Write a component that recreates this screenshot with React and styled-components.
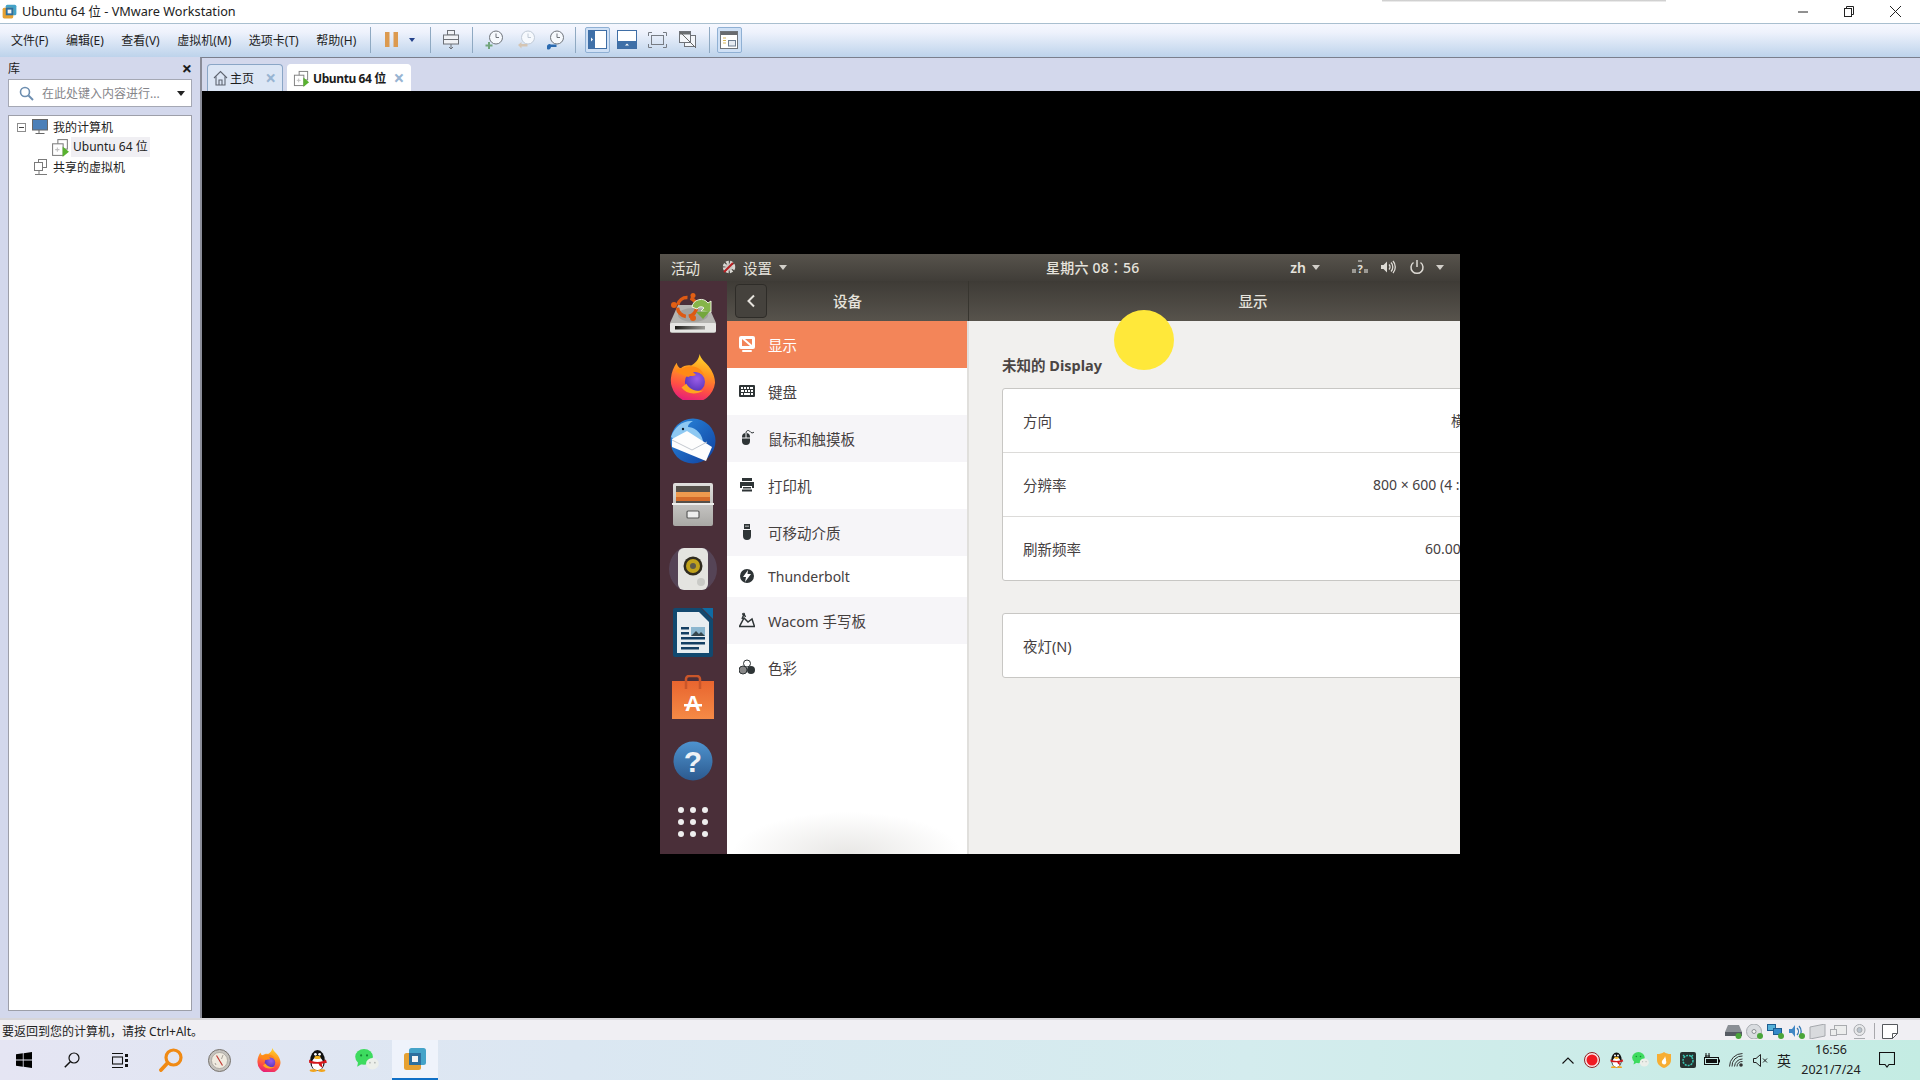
import React from 'react';
import styled, { createGlobalStyle } from 'styled-components';

const GlobalStyle = createGlobalStyle`
  html, body { margin: 0; padding: 0; height: 100%; overflow: hidden; background: #fff; }
  #root { height: 100%; }
  * { box-sizing: border-box; }
  body { font-family: "Noto Sans", "Noto Sans CJK SC", sans-serif; color: #1c1c1c; }
  svg { display: block; }
`;

const Page = styled.div`
  position: relative;
  display: flex;
  flex-direction: column;
  width: 1920px;
  height: 1080px;
  overflow: hidden;
`;

/* ---------- window chrome ---------- */

const TitleBar = styled.div`
  display: flex;
  align-items: center;
  height: 23px;
  flex: none;
  padding-left: 2px;
  background: #fff;
`;

const TitleText = styled.span`
  margin-left: 5px;
  font-size: 12.7px;
  line-height: 23px;
  color: #222;
`;

const WinControls = styled.div`
  display: flex;
  margin-left: auto;
  padding-right: 2px;
`;

const WinButton = styled.div`
  display: flex;
  align-items: center;
  justify-content: center;
  width: 46px;
  height: 23px;
`;

const FloatShadow = styled.div`
  position: absolute;
  top: 0;
  left: 1382px;
  width: 284px;
  height: 2px;
  background: linear-gradient(#c4c4c4, #f6f6f6);
`;

const Toolbar = styled.div`
  display: flex;
  align-items: center;
  height: 34px;
  flex: none;
  padding: 0 0 2px 11px;
  border-top: 1px solid #a9bfcf;
  background: linear-gradient(#f5f7fe, #eef2fc 25%, #bdd3eb);
`;

const MenuItem = styled.span`
  font-size: 12px;
  margin-right: 17.5px;
  color: #1e1e1e;
  white-space: nowrap;
`;

const ToolSep = styled.span`
  width: 1px;
  height: 26px;
  margin-left: ${p => p.$ml}px;
  background: #8fa9c2;
`;

const ToolSlot = styled.span`
  display: flex;
  align-items: center;
  justify-content: center;
  width: ${p => p.$w}px;
  height: 26px;
  margin-left: ${p => p.$ml}px;
  border-radius: 2px;
  border: ${p => (p.$active ? '1px solid #8fb0d4' : 'none')};
  background: ${p => (p.$active ? '#cfe0f5' : 'transparent')};
`;

const Main = styled.div`
  display: flex;
  flex: 1;
  min-height: 0;
  background: #d3d8ec;
`;

/* ---------- library pane ---------- */

const Library = styled.aside`
  display: flex;
  flex-direction: column;
  width: 200px;
  flex: none;
  padding: 0 8px 7px;
`;

const LibraryHead = styled.div`
  display: flex;
  align-items: center;
  justify-content: space-between;
  height: 22px;
  font-size: 12px;
`;

const CloseMark = styled.span`
  font-size: 18px;
  line-height: 18px;
  font-weight: 700;
`;

const SearchBox = styled.div`
  display: flex;
  align-items: center;
  height: 28px;
  padding: 0 6px 0 10px;
  border: 1px solid #a5a8b4;
  background: #fff;
  font-size: 12px;
  color: #85858a;
  gap: 8px;
`;

const SearchCaret = styled.span`
  width: 0;
  height: 0;
  margin-left: auto;
  border-left: 4px solid transparent;
  border-right: 4px solid transparent;
  border-top: 5px solid #222;
`;

const Tree = styled.div`
  display: flex;
  flex-direction: column;
  flex: 1;
  margin-top: 8px;
  padding-top: 1px;
  border: 1px solid #9d9fa9;
  background: #fff;
`;

const TreeRow = styled.div`
  display: flex;
  align-items: center;
  height: 20px;
  padding-left: ${p => p.$pad}px;
  font-size: 12px;
  gap: ${p => p.$gap || 3}px;
  color: #222;
`;

const Expander = styled.span`
  display: flex;
  align-items: center;
  justify-content: center;
  width: 9px;
  height: 9px;
  margin-right: 1px;
  border: 1px solid #8d8d8d;
  &::before { content: ''; width: 5px; height: 1px; background: #444; }
`;

const Selected = styled.span`
  padding: 0 2px;
  line-height: 20px;
  background: #f0eff3;
  white-space: nowrap;
`;

const Workspace = styled.section`
  display: flex;
  flex-direction: column;
  flex: 1;
  min-width: 0;
  border-top: 1px solid #7b7f8c;
  border-left: 2px solid #8a8c98;
`;

const TabStrip = styled.div`
  display: flex;
  align-items: flex-end;
  gap: 4px;
  height: 33px;
  flex: none;
  padding-left: 5px;
`;

const Tab = styled.div`
  display: flex;
  align-items: center;
  width: ${p => p.$w}px;
  height: 27px;
  padding: 0 6px 0 5px;
  gap: ${p => (p.$active ? 3 : 2)}px;
  font-size: 12px;
  font-weight: ${p => (p.$active ? 700 : 400)};
  letter-spacing: ${p => (p.$active ? '-0.4px' : '0')};
  white-space: nowrap;
  border: 1px solid ${p => (p.$active ? '#fff' : '#8aa6c6')};
  border-bottom: none;
  border-radius: 4px 4px 0 0;
  background: ${p => (p.$active ? '#fff' : '#dce6f5')};
`;

const TabClose = styled.span`
  margin-left: auto;
  font-size: 19px;
  line-height: 19px;
  font-weight: 700;
  color: #98b4d2;
`;

const Screen = styled.div`
  display: flex;
  align-items: center;
  justify-content: center;
  flex: 1;
  background: #000;
`;

/* ---------- ubuntu guest ---------- */

const Guest = styled.div`
  position: relative;
  display: flex;
  flex-direction: column;
  width: 800px;
  height: 600px;
  margin: 0 2px 2px 0;
  overflow: hidden;
  background: #f1f0ee;
  font-size: 14.5px;
  color: #45403f;
`;

const GnomeBar = styled.div`
  display: grid;
  grid-template-columns: 386px 97px 1fr;
  align-items: center;
  height: 27px;
  flex: none;
  background: linear-gradient(#57534c, #403d38);
  color: #e6e3dd;
  font-size: 14.5px;
`;

const GnomeLeft = styled.div`
  display: flex;
  align-items: center;
  padding-left: 11px;
`;

const GnomeClock = styled.div`
  font-family: "Noto Sans", "Noto Sans CJK TC", sans-serif;
  font-size: 14px;
  font-weight: 500;
  letter-spacing: 0.2px;
  white-space: nowrap;
`;

const GnomeRight = styled.div`
  display: flex;
  align-items: center;
  justify-content: flex-end;
  padding-right: 16px;
`;

const GnomeLang = styled.span`
  font-size: 14px;
  font-weight: 600;
`;

const Gap = styled.span`
  flex: none;
  width: ${p => p.$w}px;
`;

const Caret = styled.span`
  width: 0;
  height: 0;
  margin-left: ${p => p.$ml || 0}px;
  border-left: 4px solid transparent;
  border-right: 4px solid transparent;
  border-top: 5px solid #d2cfc9;
`;

const GuestBody = styled.div`
  display: flex;
  flex: 1;
  min-height: 0;
`;

const Dock = styled.div`
  display: flex;
  flex-direction: column;
  width: 67px;
  flex: none;
  padding-right: 2px;
  background: #4a2f39;
`;

const DockSlot = styled.div`
  display: flex;
  align-items: center;
  justify-content: center;
  height: 64px;
  flex: none;
`;

const AppDots = styled.div`
  display: grid;
  grid-template-columns: repeat(3, 6px);
  gap: 6px;
  margin-top: -6px;
  span { width: 6px; height: 6px; border-radius: 50%; background: #eee; }
`;

const SettingsWindow = styled.div`
  display: grid;
  grid-template-columns: 242px 568px;
  grid-template-rows: 40px 1fr;
  flex: none;
  width: 810px;
`;

const HeaderCell = styled.div`
  position: relative;
  display: flex;
  align-items: center;
  justify-content: center;
  background: linear-gradient(#3e3b36, #57534c);
  border-right: ${p => (p.$divider ? '1px solid #37352f' : 'none')};
  color: #e6e3dd;
  font-weight: 500;
  font-size: 14.5px;
`;

const BackButton = styled.span`
  position: absolute;
  left: 8px;
  top: 3px;
  display: flex;
  align-items: center;
  justify-content: center;
  width: 32px;
  height: 34px;
  border: 1px solid #2e2c28;
  border-radius: 4px;
  background: #45423d;
`;

const SideList = styled.nav`
  display: flex;
  flex-direction: column;
  background: radial-gradient(ellipse 115px 42px at 50% 100%, #e8e7e5, #fff 100%);
  border-right: 2px solid #e0dfdc;
`;

const SideRow = styled.div`
  display: flex;
  align-items: center;
  gap: 13px;
  height: ${p => p.$h || 47}px;
  flex: none;
  padding-left: 12px;
  font-size: ${p => p.$fs || 14.5}px;
  background: ${p => (p.$active ? '#f38559' : p.$alt ? '#f6f5f8' : 'transparent')};
  color: ${p => (p.$active ? '#fff' : '#45403f')};
`;

const Content = styled.div`
  padding: 34px 0 0 33px;
`;

const SectionTitle = styled.h2`
  margin: 0 0 13px;
  font-size: 14.5px;
  line-height: 20px;
  font-weight: 700;
  color: #4a4543;
`;

const Panel = styled.div`
  width: 520px;
  margin-bottom: 32px;
  border: 1px solid #c8c7c4;
  border-radius: 3px;
  background: #fff;
`;

const PanelRow = styled.div`
  display: flex;
  align-items: center;
  height: 63px;
  padding-left: 20px;
  white-space: nowrap;
  & + & { height: 64px; border-top: 1px solid #dcdbd9; }
`;

const RowLabel = styled.span`
  flex: none;
  width: 100px;
`;

const RowValue = styled.span`
  margin-left: ${p => p.$ml}px;
  font-size: 14px;
`;

const CursorHalo = styled.div`
  position: absolute;
  left: 454px;
  top: 56px;
  width: 60px;
  height: 60px;
  border-radius: 50%;
  background: #ffe83a;
`;

/* ---------- status + taskbar ---------- */

const StatusBar = styled.footer`
  display: flex;
  align-items: center;
  justify-content: space-between;
  height: 22px;
  flex: none;
  padding: 2px 22px 0 2px;
  border-top: 2px solid #d7d6da;
  background: #f0eff3;
  font-size: 12px;
  color: #222;
`;

const StatusIcons = styled.div`
  display: flex;
  align-items: center;
`;

const StatusSlot = styled.span`
  display: flex;
  justify-content: center;
  width: 21px;
`;

const StatusSep = styled.span`
  width: 1px;
  height: 16px;
  margin: 0 7px 0 4px;
  background: #a8a8ac;
`;

const Taskbar = styled.div`
  display: flex;
  align-items: center;
  height: 40px;
  flex: none;
  background: linear-gradient(90deg, #e5e5f3, #dbe7f2 30%, #d4ecee 65%, #c4ece3);
`;

const TaskSlot = styled.span`
  display: flex;
  align-items: center;
  justify-content: center;
  width: ${p => p.$w || 48}px;
  height: 40px;
  margin-left: ${p => p.$ml || 0}px;
  background: ${p => (p.$active ? '#eff3fb' : 'transparent')};
  border-bottom: ${p => (p.$active ? '2px solid #0f6fc6' : 'none')};
  flex: none;
`;

const Tray = styled.div`
  display: flex;
  align-items: center;
  margin-left: auto;
  padding-right: 13px;
`;

const TraySlot = styled.span`
  display: flex;
  align-items: center;
  justify-content: center;
  width: 24px;
  font-size: 14px;
  color: #1c1c1c;
`;

const TrayClock = styled.div`
  display: flex;
  flex-direction: column;
  align-items: center;
  width: 70px;
  font-size: 12.5px;
  line-height: 20px;
  color: #222;
`;

const NotifySlot = styled.span`
  display: flex;
  justify-content: center;
  width: 41px;
`;

/* ---------- icons ---------- */

const VmwareIcon = ({ size = 16 }) => (
  <svg width={size} height={size} viewBox="0 0 24 24">
    <rect x="6" y="1" width="17" height="17" rx="2.5" fill="#44a3c9" />
    <rect x="1" y="6" width="17" height="17" rx="2.5" fill="#e6a132" />
    <rect x="6" y="6" width="12" height="12" fill="#2e6f9e" />
    <rect x="9" y="9" width="6" height="6" fill="#f4f4f4" />
  </svg>
);

const VmTabIcon = ({ size = 17 }) => (
  <svg width={size} height={size} viewBox="0 0 18 18" fill="none" stroke="#7f7f7f">
    <rect x="6.5" y="1.5" width="9" height="9" fill="#fff" />
    <rect x="1.5" y="5.5" width="10" height="11" fill="#fff" />
    <path d="M6 9v4M4 11h4" stroke="#c0c0c0" />
    <path d="M11 8l6 5-6 5z" fill="#58b22f" stroke="none" />
  </svg>
);

const HomeIcon = () => (
  <svg width="15" height="16" viewBox="0 0 15 16" fill="none" stroke="#5e6470" strokeWidth="1.1">
    <path d="M1 8l6.5-6.5L14 8" />
    <path d="M3 6.5V15h9V6.5M6 15v-5h3v5" />
  </svg>
);

const MonitorIcon = () => (
  <svg width="16" height="16" viewBox="0 0 16 16">
    <rect x=".5" y=".5" width="15" height="10.5" fill="#4a7fb8" stroke="#666" />
    <path d="M7 11v3M3.5 14.5h9" stroke="#666" />
  </svg>
);

const SharedIcon = () => (
  <svg width="14" height="16" viewBox="0 0 14 16" fill="none" stroke="#7a7a7a">
    <rect x="4.5" y=".5" width="8" height="8" fill="#fff" />
    <rect x=".5" y="3.5" width="8" height="8" fill="#fff" />
    <path d="M5 12v3M1 15.5h12" />
  </svg>
);

const SearchIcon = () => (
  <svg width="15" height="15" viewBox="0 0 15 15" fill="none" stroke="#6d8eb0" strokeWidth="1.6">
    <circle cx="6" cy="6" r="4.5" />
    <path d="M9.5 9.5l4.5 4.5" strokeWidth="2" />
  </svg>
);

const PauseIcon = () => (
  <svg width="13" height="15" viewBox="0 0 13 15" fill="#dc9a50">
    <rect width="4.5" height="15" />
    <rect x="8.5" width="4.5" height="15" />
  </svg>
);

const SmallCaret = () => (
  <svg width="6" height="4" viewBox="0 0 6 4"><path d="M0 0h6L3 4z" fill="#23418a" /></svg>
);

const SendKeysIcon = () => (
  <svg width="16" height="20" viewBox="0 0 16 20" fill="#f0f2f6" stroke="#6c7077">
    <rect x="4.5" y=".5" width="7" height="4.5" />
    <rect x=".5" y="5" width="15" height="4.5" />
    <rect x=".5" y="9.5" width="15" height="4.5" />
    <path d="M8 14v5M6 17l2 2 2-2" fill="none" />
  </svg>
);

const ClockIcon = ({ faded, badge }) => (
  <svg width="18" height="20" viewBox="0 0 18 20" fill="none">
    <circle cx="11" cy="7.5" r="6.5" fill="#f6f9fd" stroke={faded ? '#c0cad6' : '#70757c'} />
    <path d="M11 3.5v4h3" stroke={faded ? '#c0cad6' : '#70757c'} />
    {badge === 'plus' && <path d="M4 12v7M.5 15.5h7" stroke="#72a67c" strokeWidth="2" />}
    {badge === 'back' && <path d="M1 15l3.5-3v2h6v2.5h-6v2z" fill="#d5c5b3" />}
    {badge === 'tool' && <path d="M1 16a2.5 2.5 0 014-1.5h5.5v2.5H5A2.5 2.5 0 011 19z" fill="#2a6ab0" />}
  </svg>
);

const ViewSidebar = () => (
  <svg width="19" height="19" viewBox="0 0 19 19">
    <rect x=".5" y=".5" width="18" height="18" fill="#fff" stroke="#3f6ea6" />
    <rect x="1" y="1" width="6" height="17" fill="#3f70a8" />
    <path d="M3 7.5l2 2-2 2z" fill="#fff" />
  </svg>
);

const ViewBottom = () => (
  <svg width="20" height="19" viewBox="0 0 20 19">
    <rect x=".5" y=".5" width="19" height="18" fill="#fff" stroke="#3f6ea6" />
    <rect x="1" y="11" width="18" height="7" fill="#3f70a8" />
    <path d="M8 15.5h4L10 13.5z" fill="#fff" />
  </svg>
);

const ViewFull = () => (
  <svg width="19" height="16" viewBox="0 0 19 16" fill="none" stroke="#777c84">
    <rect x="3.5" y="3.5" width="12" height="9" />
    <path d="M.5 4V.5H4M15 .5h3.5V4M18.5 12v3.5H15M4 15.5H.5V12" />
  </svg>
);

const ViewNoUnity = () => (
  <svg width="18" height="18" viewBox="0 0 18 18" fill="#f4f6fa" stroke="#6f7278">
    <rect x="5.5" y="4.5" width="11" height="11" />
    <rect x=".5" y=".5" width="11" height="11" />
    <rect x="1" y="1" width="10" height="2.5" fill="#6b6e72" stroke="none" />
    <path d="M1 1l16 16" stroke="#666" />
  </svg>
);

const ThumbView = () => (
  <svg width="18" height="18" viewBox="0 0 18 18">
    <rect x=".5" y=".5" width="17" height="17" fill="#fff" stroke="#6f747a" />
    <rect x="1" y="1" width="16" height="3" fill="#676a6f" />
    <path d="M3 7h3M3 9.5h3M3 12h3" stroke="#d8b75b" />
    <rect x="8.5" y="9.5" width="7" height="5.5" fill="#e6ebf2" stroke="#6f7f92" />
  </svg>
);

const Firefox = ({ size = 46, id = 'ff' }) => (
  <svg width={size} height={size} viewBox="0 0 48 48">
    <defs>
      <linearGradient id={`${id}a`} x1="0.65" y1="0" x2="0.4" y2="1">
        <stop offset="0" stopColor="#ffd62e" />
        <stop offset=".35" stopColor="#ff9a1f" />
        <stop offset=".7" stopColor="#ff4f45" />
        <stop offset="1" stopColor="#e3197f" />
      </linearGradient>
      <radialGradient id={`${id}b`} cx=".6" cy=".35" r=".8">
        <stop offset="0" stopColor="#9a5ee8" />
        <stop offset="1" stopColor="#4a2ab0" />
      </radialGradient>
    </defs>
    <path d="M31 0c1 6 7 9 11 15 4 6 5 11 5 15a23 23 0 11-46-5c.5-6 3-12 6-16 .5 3 2 5 4 6 3-3 8-4 11-3 4-2 8-6 9-12z" fill={`url(#${id}a)`} />
    <circle cx="26" cy="29" r="10.500" fill={`url(#${id}b)`} />
    <path d="M6 18c2-2 4-4 7-3 5-3 12-3 17 0 3 2 5 5 6 8-3-3-7-5-12-4 1 1 3 2 3 3-3 2-5 0-8 2-3-1-9-3-13-6z" fill="#ff8a16" />
    <path d="M12 35c5 7 15 8 23 3-7 1-14 0-18-7z" fill="#ffa51f" />
  </svg>
);

const UpdaterIcon = () => (
  <svg width="48" height="40" viewBox="0 0 48 40">
    <defs>
      <linearGradient id="hddf" x1="0" y1="0" x2="1" y2="0">
        <stop offset="0" stopColor="#1d1b18" />
        <stop offset="1" stopColor="#9b9a97" />
      </linearGradient>
    </defs>
    <path d="M9 12h30l8 18v8a2 2 0 01-2 2H3a2 2 0 01-2-2v-8z" fill="#b6b5b2" />
    <ellipse cx="24" cy="22" rx="15" ry="7" fill="#a2a19e" />
    <rect x="1" y="30" width="46" height="9" rx="1.500" fill="#e6e5e3" />
    <rect x="6" y="33" width="30" height="3.500" fill="url(#hddf)" />
    <circle cx="18" cy="14" r="9.500" fill="none" stroke="#dd5a14" strokeWidth="3.500" strokeDasharray="13 3" />
    <circle cx="5" cy="12" r="3" fill="#e25f14" />
    <circle cx="24" cy="2.500" r="2.500" fill="#e25f14" />
    <circle cx="24" cy="25" r="3" fill="#e25f14" />
    <path d="M23 14a9 9 0 0116-4l3-2v11l-10-1 3-3a4.500 4.500 0 00-7 1z" fill="#86b54a" stroke="#eef5df" strokeWidth="1" />
    <path d="M27 19l7 7 7-8z" fill="#74a73d" />
  </svg>
);

const Thunderbird = () => (
  <svg width="48" height="46" viewBox="0 0 48 46">
    <defs>
      <linearGradient id="tb" x1="0" y1="0" x2="1" y2="1">
        <stop offset="0" stopColor="#2b8ce0" />
        <stop offset="1" stopColor="#0f3f9e" />
      </linearGradient>
    </defs>
    <circle cx="24" cy="23" r="22.500" fill="url(#tb)" />
    <path d="M2 19C5 9 14 2 24 3c-3 2-5 3-5 6 5 0 13 4 15 14L10 24z" fill="#8dc8f2" />
    <path d="M3 21l15-8 25 16-6 14-34-14z" fill="#fdfdfd" />
    <path d="M3 22l20 10 15-8" fill="none" stroke="#c3c8cf" strokeWidth="1" />
    <circle cx="14" cy="11" r="1.200" fill="#123" />
  </svg>
);

const FilesIcon = () => (
  <svg width="42" height="43" viewBox="0 0 42 43">
    <defs>
      <linearGradient id="cab" x1="0" y1="0" x2="0" y2="1">
        <stop offset="0" stopColor="#e0dfdd" />
        <stop offset="1" stopColor="#a9a8a5" />
      </linearGradient>
    </defs>
    <rect x="1" width="40" height="43" rx="2" fill="url(#cab)" />
    <rect x="4" y="3" width="34" height="18" fill="#55504a" />
    <rect x="4" y="9" width="34" height="6" fill="#ee9a4e" />
    <rect x="4" y="14" width="34" height="4" fill="#d36b2a" />
    <rect x="0" y="20" width="42" height="2" fill="#eeeeec" />
    <rect x="15" y="28" width="12" height="7" rx="1" fill="#eee" stroke="#5b5b5b" strokeWidth="1.200" />
  </svg>
);

const SpeakerIcon = () => (
  <svg width="48" height="42" viewBox="0 0 48 42">
    <circle cx="24" cy="21" r="24" fill="#5e5570" opacity=".55" />
    <rect x="9" y="0" width="30" height="42" rx="6" fill="#e4e4e0" />
    <circle cx="24" cy="18" r="9.500" fill="#2f2b1f" />
    <circle cx="24" cy="18" r="7" fill="#c0a21c" />
    <circle cx="24" cy="18" r="3" fill="#5d5a4c" />
    <circle cx="32" cy="34" r="4" fill="#c9cac6" />
  </svg>
);

const WriterIcon = () => (
  <svg width="40" height="49" viewBox="0 0 40 49">
    <path d="M2 0h26l12 12v35a2 2 0 01-2 2H2a2 2 0 01-2-2V2a2 2 0 012-2z" fill="#12496f" />
    <path d="M4 4h22l10 10v31H4z" fill="#e8eef1" />
    <path d="M29 0h11v11z" fill="#0f6ba3" />
    <rect x="18" y="19" width="14" height="9" fill="#8bb7cf" />
    <path d="M18 28l5-5 3 3 2-2 4 4z" fill="#36474d" />
    <path d="M8 19h8v2.500H8zM8 24h8v2.500H8zM8 29h24v2.500H8zM8 34h24v2.500H8zM8 39h18v2.500H8z" fill="#123f63" />
  </svg>
);

const StoreIcon = () => (
  <svg width="42" height="44" viewBox="0 0 42 44">
    <defs>
      <linearGradient id="bag" x1="0" y1="0" x2="0" y2="1">
        <stop offset="0" stopColor="#e8652f" />
        <stop offset="1" stopColor="#f58a46" />
      </linearGradient>
    </defs>
    <rect y="6" width="42" height="38" fill="url(#bag)" />
    <path d="M14 14V4a3 3 0 013-3h8a3 3 0 013 3v10" fill="none" stroke="#c9562a" strokeWidth="2.500" />
    <text x="21" y="36" textAnchor="middle" fontSize="22" fontWeight="700" fontFamily="Liberation Sans" fill="#fff">A</text>
    <rect x="12" y="29" width="18" height="2.500" fill="#fff" />
  </svg>
);

const HelpIcon = () => (
  <svg width="40" height="40" viewBox="0 0 40 40">
    <defs>
      <linearGradient id="help" x1="0" y1="0" x2="0" y2="1">
        <stop offset="0" stopColor="#4e93cf" />
        <stop offset="1" stopColor="#2c5a8f" />
      </linearGradient>
    </defs>
    <circle cx="20" cy="20" r="19.500" fill="url(#help)" />
    <text x="20" y="31" textAnchor="middle" fontSize="30" fontWeight="700" fontFamily="Liberation Sans" fill="#eef2f6">?</text>
  </svg>
);

const Gear = () => (
  <svg width="14" height="14" viewBox="0 0 14 14">
    <circle cx="7" cy="7" r="4.500" fill="none" stroke="#d8d6d1" strokeWidth="3.500" strokeDasharray="2.500 1.100" />
    <circle cx="7" cy="7" r="3.500" fill="#c9c7c2" />
    <path d="M2 12l9-9" stroke="#b81f23" strokeWidth="2" />
  </svg>
);

const NetQuestion = () => (
  <svg width="16" height="14" viewBox="0 0 16 14" fill="#9c9a95">
    <rect y="9" width="4" height="4" />
    <rect x="12" y="9" width="4" height="4" />
    <rect x="6" width="4" height="2" />
    <text x="8" y="13" textAnchor="middle" fontSize="11" fontWeight="700" fontFamily="Noto Sans" fill="#e6e3dd">?</text>
  </svg>
);

const VolumeIcon = () => (
  <svg width="16" height="14" viewBox="0 0 16 14" fill="none" stroke="#dedbd5" strokeWidth="1.300">
    <path d="M1 5h2.500L7 1.500v11L3.500 9H1z" fill="#dedbd5" stroke="none" />
    <path d="M9 4.500a3.500 3.500 0 010 5M11 2.500a6.500 6.500 0 010 9M13 1a9 9 0 010 12" />
  </svg>
);

const PowerIcon = () => (
  <svg width="16" height="16" viewBox="0 0 16 16" fill="none" stroke="#dedbd5" strokeWidth="1.500">
    <path d="M8 1v7" />
    <path d="M4.500 3.500a6 6 0 107 0" />
  </svg>
);

const BackChevron = () => (
  <svg width="10" height="14" viewBox="0 0 10 14" fill="none" stroke="#e6e3dd" strokeWidth="2">
    <path d="M8 1.500L2.500 7 8 12.500" />
  </svg>
);

const symbolic = { width: 16, height: 16, viewBox: '0 0 16 16' };

const DisplaySym = () => (
  <svg {...symbolic} fill="#fff">
    <path fillRule="evenodd" d="M2 0h12a2 2 0 012 2v9a2 2 0 01-2 2H2a2 2 0 01-2-2V2a2 2 0 012-2zm1 3v7h8L3 3zm3 0l7 6V3z" />
    <rect x="3" y="14" width="10" height="2" rx="1" />
  </svg>
);

const KeyboardSym = () => (
  <svg {...symbolic} viewBox="0 0 16 12" height="12" fill="#2e3436">
    <path fillRule="evenodd" d="M1 0h14a1 1 0 011 1v10a1 1 0 01-1 1H1a1 1 0 01-1-1V1a1 1 0 011-1zm1 2v2h2V2zm3 0v2h2V2zm3 0v2h2V2zm3 0v2h3V2zM2 5v2h3V5zm4 0v2h2V5zm3 0v2h2V5zm3 0v2h2V5zM2 8v2h2V8zm3 0v2h6V8zm7 0v2h2V8z" />
  </svg>
);

const MouseSym = () => (
  <svg {...symbolic}>
    <rect x="3" y="3" width="8" height="12" rx="4" fill="#2e3436" />
    <path d="M3 8h8M7 3v5" stroke="#f6f5f8" />
    <path d="M7 3c0-3 3-3 4-1.500s3 2 4 .5" fill="none" stroke="#2e3436" />
  </svg>
);

const PrinterSym = () => (
  <svg {...symbolic} fill="#2e3436">
    <rect x="3" y="1" width="10" height="3" />
    <path fillRule="evenodd" d="M1 5h14v6h-2V9H3v2H1z" />
    <rect x="4" y="10" width="8" height="1.500" />
    <rect x="3" y="12.500" width="10" height="2" />
  </svg>
);

const UsbSym = () => (
  <svg {...symbolic} fill="#2e3436">
    <path d="M5 0h6v5H5zM4 6h8v6a4 4 0 01-8 0z" />
    <rect x="6.500" y="1.500" width="1" height="1.500" fill="#f6f5f8" />
    <rect x="8.500" y="1.500" width="1" height="1.500" fill="#f6f5f8" />
  </svg>
);

const BoltSym = () => (
  <svg {...symbolic} fill="#2e3436">
    <path fillRule="evenodd" d="M8 1a7 7 0 110 14A7 7 0 018 1zm1 1L4 9h3l-1 5 6-8H8.500z" />
  </svg>
);

const WacomSym = () => (
  <svg {...symbolic} fill="none" stroke="#2e3436" strokeWidth="1.500">
    <path d="M.5 14.500h15L13 7 9 10 5 6z" />
    <path d="M3 7l2-5 1.500 3M3 2h3" />
  </svg>
);

const ColorSym = () => (
  <svg {...symbolic}>
    <circle cx="8" cy="4.500" r="3.500" fill="#fff" stroke="#2e3436" />
    <circle cx="4" cy="11" r="4" fill="#888" stroke="#2e3436" />
    <circle cx="12" cy="11" r="4" fill="#2e3436" />
  </svg>
);

const WindowsLogo = () => (
  <svg width="16" height="16" viewBox="0 0 16 16" fill="#000">
    <path d="M0 2.300l6.800-1v6.200H0zM7.600 1.200L16 0v7.500H7.600zM0 8.400h6.800v6.300l-6.800-1zM7.600 8.400H16V16l-8.400-1.200z" />
  </svg>
);

const TaskSearch = () => (
  <svg width="16" height="16" viewBox="0 0 16 16" fill="none" stroke="#111" strokeWidth="1.200">
    <circle cx="10" cy="6" r="5" />
    <path d="M6.300 9.700L.8 15.200" strokeWidth="1.500" />
  </svg>
);

const TaskView = () => (
  <svg width="16" height="15" viewBox="0 0 16 15" fill="none" stroke="#111" strokeWidth="1.100">
    <path d="M0 .5h11M0 14.500h11" />
    <rect x=".5" y="4" width="10" height="7" />
    <rect x="13" y="1" width="3" height="3" fill="#111" stroke="none" />
    <rect x="13" y="6" width="3" height="3" fill="#111" stroke="none" />
    <rect x="13" y="11" width="3" height="3" fill="#111" stroke="none" />
  </svg>
);

const OrangeSearch = () => (
  <svg width="24" height="24" viewBox="0 0 24 24" fill="none" stroke="#f08a14" strokeWidth="3.200">
    <circle cx="14.500" cy="9.500" r="7.500" />
    <path d="M8.500 15L2 22" strokeWidth="3.800" strokeLinecap="round" />
  </svg>
);

const Compass = () => (
  <svg width="23" height="23" viewBox="0 0 23 23">
    <circle cx="11.500" cy="11.500" r="11" fill="#c4c1bc" stroke="#77736e" />
    <circle cx="11.500" cy="11.500" r="8" fill="#efeadf" stroke="#96928c" strokeWidth=".6" />
    <path d="M8.500 6.500l6 10" stroke="#c33a34" strokeWidth="1.200" />
    <path d="M15 6l-1.500 4M7 14l1 2" stroke="#a8a29a" strokeWidth="1" />
  </svg>
);

const Penguin = ({ size = 20 }) => (
  <svg width={size} height={size * 1.15} viewBox="0 0 20 23">
    <ellipse cx="10" cy="12" rx="7" ry="10" fill="#111" />
    <ellipse cx="10" cy="15" rx="5.500" ry="6.500" fill="#fff" />
    <path d="M2 11c3 3 13 3 16 0l1 3-5 1 1 4-3-2-1-2c-3 0-7 0-9-1z" fill="#d4161b" />
    <ellipse cx="10" cy="9" rx="3" ry="1.500" fill="#f4b41f" />
    <circle cx="8" cy="6" r="1.300" fill="#fff" />
    <circle cx="12" cy="6" r="1.300" fill="#fff" />
    <ellipse cx="6" cy="21.500" rx="3.500" ry="1.300" fill="#f2a51c" />
    <ellipse cx="14" cy="21.500" rx="3.500" ry="1.300" fill="#f2a51c" />
  </svg>
);

const WeChat = ({ size = 24 }) => (
  <svg width={size} height={size * 0.9} viewBox="0 0 24 22">
    <ellipse cx="9" cy="8" rx="9" ry="8" fill="#3ddb5f" />
    <path d="M3 13l-1 5 5-3z" fill="#3ddb5f" />
    <circle cx="6" cy="6.500" r="1.100" fill="#178a35" />
    <circle cx="12" cy="6.500" r="1.100" fill="#178a35" />
    <ellipse cx="17.500" cy="15" rx="6.500" ry="5.800" fill="#ecefea" />
    <circle cx="15" cy="14" r=".9" fill="#b6bab6" />
    <circle cx="20" cy="14" r=".9" fill="#b6bab6" />
  </svg>
);

const HddStatus = () => (
  <svg width="17" height="15" viewBox="0 0 17 15">
    <path d="M3 1h11l3 7v4H0V8z" fill="#8a8f95" />
    <rect y="8" width="17" height="4" fill="#555b62" />
    <circle cx="13.500" cy="12" r="3" fill="#4aa53a" />
  </svg>
);

const DiscStatus = () => (
  <svg width="17" height="15" viewBox="0 0 17 15">
    <circle cx="8" cy="7.500" r="7.500" fill="#d9dce0" stroke="#a7abb0" />
    <circle cx="8" cy="7.500" r="2" fill="#f4f4f4" stroke="#8b8f94" />
    <circle cx="14" cy="12" r="3" fill="#4aa53a" />
  </svg>
);

const NetStatus = () => (
  <svg width="17" height="15" viewBox="0 0 17 15" stroke="#1c5d92">
    <rect x=".5" y=".5" width="8" height="6" fill="#55b1d8" />
    <rect x="6.500" y="4.500" width="8" height="6" fill="#3489c8" />
    <circle cx="14" cy="12" r="3" fill="#4aa53a" stroke="none" />
  </svg>
);

const AudioStatus = () => (
  <svg width="17" height="15" viewBox="0 0 17 15" fill="none" stroke="#3278b4" strokeWidth="1.300">
    <path d="M1 5h3l3-4v12l-3-4H1z" fill="#3f86c4" stroke="none" />
    <path d="M9 4a5 5 0 010 7M11 2a8 8 0 010 11" />
    <circle cx="14" cy="12" r="3" fill="#4aa53a" stroke="none" />
  </svg>
);

const UsbStatus = () => (
  <svg width="17" height="15" viewBox="0 0 17 15">
    <path d="M1 3l15-3v12L1 15z" fill="#d8dadd" stroke="#a5a8ad" />
  </svg>
);

const KeysStatus = () => (
  <svg width="17" height="13" viewBox="0 0 17 13" fill="#eceded" stroke="#a9abaf">
    <rect x="4.500" y=".5" width="12" height="9" />
    <rect x=".5" y="4.500" width="6" height="6" />
  </svg>
);

const CamStatus = () => (
  <svg width="15" height="15" viewBox="0 0 15 15" fill="#e7e8ea" stroke="#a9abaf">
    <circle cx="7.500" cy="6" r="5.500" />
    <circle cx="7.500" cy="6" r="2.500" fill="#b9c3cc" />
    <path d="M2 14.500h11" />
  </svg>
);

const NoteStatus = () => (
  <svg width="16" height="15" viewBox="0 0 16 15" fill="#fff" stroke="#55585c">
    <path d="M.5.5h15v9l-5 5H.5z" />
    <path d="M15.500 9.500h-5v5" fill="none" />
  </svg>
);

const RecordDot = () => (
  <svg width="16" height="16" viewBox="0 0 16 16">
    <circle cx="8" cy="8" r="7.500" fill="#f9e6e6" stroke="#8e2225" />
    <circle cx="8" cy="8" r="5.500" fill="#f01a22" />
  </svg>
);

const Shield = () => (
  <svg width="14" height="16" viewBox="0 0 14 16">
    <path d="M7 0c2 1.500 4 2 7 2v6c0 4-3 6.500-7 8-4-1.500-7-4-7-8V2c3 0 5-.5 7-2z" fill="#f7ae33" />
    <path d="M8 4C8 7 4 8 5 11c.5 1.500 3 2 4 .5 1-2-.5-2.500 0-4z" fill="#fff" />
  </svg>
);

const TigerTile = () => (
  <svg width="16" height="16" viewBox="0 0 16 16">
    <rect width="16" height="16" rx="2" fill="#26312f" />
    <circle cx="8" cy="8.500" r="5" fill="none" stroke="#39c5b1" strokeWidth="1.500" strokeDasharray="2 1" />
    <path d="M3 3l2 2M13 3l-2 2" stroke="#39c5b1" strokeWidth="1.300" />
  </svg>
);

const Battery = () => (
  <svg width="16" height="14" viewBox="0 0 16 14">
    <rect x=".5" y="4.500" width="14" height="7" fill="none" stroke="#111" />
    <rect x="2" y="6" width="11" height="4" fill="#111" />
    <rect x="15" y="6.500" width="1" height="3" fill="#111" />
    <path d="M2 0v4M5 0v4M1 3h5" stroke="#111" />
  </svg>
);

const Wifi = () => (
  <svg width="14" height="14" viewBox="0 0 14 14" fill="none" stroke="#333" strokeWidth="1">
    <path d="M.5 13.500a13 13 0 0113-13M3 13.500A10 10 0 0113.500 3M5.500 13.500a8 8 0 018-7.500M8 13.500A5 5 0 0113.500 8.500" />
    <circle cx="12" cy="12" r="1.800" fill="#333" stroke="none" />
  </svg>
);

const Muted = () => (
  <svg width="15" height="13" viewBox="0 0 15 13" fill="none" stroke="#222">
    <path d="M.5 4.500h2.500L7.500.5v12L3 8.500H.5z" />
    <path d="M10 4.500l4 4M14 4.500l-4 4" />
  </svg>
);

const Chevron = () => (
  <svg width="12" height="7" viewBox="0 0 12 7" fill="none" stroke="#111" strokeWidth="1.100">
    <path d="M.5 6.500L6 1l5.500 5.500" />
  </svg>
);

const NotifyIcon = () => (
  <svg width="16" height="16" viewBox="0 0 16 16" fill="none" stroke="#111" strokeWidth="1.100">
    <path d="M.5.5h15v12H10L8 15l-2-2.500H.5z" />
  </svg>
);

const sideItems = [
  { icon: <DisplaySym />, label: '显示', active: true },
  { icon: <KeyboardSym />, label: '键盘' },
  { icon: <MouseSym />, label: '鼠标和触摸板', alt: true },
  { icon: <PrinterSym />, label: '打印机' },
  { icon: <UsbSym />, label: '可移动介质', alt: true },
  { icon: <BoltSym />, label: 'Thunderbolt', h: 41, fs: 14 },
  { icon: <WacomSym />, label: 'Wacom 手写板', alt: true },
  { icon: <ColorSym />, label: '色彩' },
];

const menus = ['文件(F)', '编辑(E)', '查看(V)', '虚拟机(M)', '选项卡(T)', '帮助(H)'];

export default function App() {
  return (
    <>
      <GlobalStyle />
      <Page>
        <FloatShadow />
        <TitleBar>
          <VmwareIcon size={15} />
          <TitleText>Ubuntu 64 位 - VMware Workstation</TitleText>
          <WinControls>
            <WinButton>
              <svg width="10" height="2" viewBox="0 0 10 2"><path d="M0 1h10" stroke="#222" /></svg>
            </WinButton>
            <WinButton>
              <svg width="10" height="11" viewBox="0 0 10 11" fill="none" stroke="#222">
                <rect x=".5" y="2.500" width="7" height="8" />
                <path d="M2.500 2.500v-2h7v8h-2" />
              </svg>
            </WinButton>
            <WinButton>
              <svg width="11" height="11" viewBox="0 0 11 11" stroke="#222"><path d="M0 0l11 11M11 0L0 11" /></svg>
            </WinButton>
          </WinControls>
        </TitleBar>

        <Toolbar>
          {menus.map(m => <MenuItem key={m}>{m}</MenuItem>)}
          <ToolSep $ml={-4} />
          <ToolSlot $w={13} $ml={14}><PauseIcon /></ToolSlot>
          <ToolSlot $w={6} $ml={11}><SmallCaret /></ToolSlot>
          <ToolSep $ml={15} />
          <ToolSlot $w={16} $ml={12}><SendKeysIcon /></ToolSlot>
          <ToolSep $ml={13} />
          <ToolSlot $w={18} $ml={12}><ClockIcon badge="plus" /></ToolSlot>
          <ToolSlot $w={18} $ml={14}><ClockIcon faded badge="back" /></ToolSlot>
          <ToolSlot $w={19} $ml={11}><ClockIcon badge="tool" /></ToolSlot>
          <ToolSep $ml={10} />
          <ToolSlot $w={25} $ml={9} $active><ViewSidebar /></ToolSlot>
          <ToolSlot $w={20} $ml={7}><ViewBottom /></ToolSlot>
          <ToolSlot $w={19} $ml={11}><ViewFull /></ToolSlot>
          <ToolSlot $w={18} $ml={12}><ViewNoUnity /></ToolSlot>
          <ToolSep $ml={12} />
          <ToolSlot $w={25} $ml={7} $active><ThumbView /></ToolSlot>
        </Toolbar>

        <Main>
          <Library>
            <LibraryHead>
              <span>库</span>
              <CloseMark>×</CloseMark>
            </LibraryHead>
            <SearchBox>
              <SearchIcon />
              <span>在此处键入内容进行...</span>
              <SearchCaret />
            </SearchBox>
            <Tree>
              <TreeRow $pad={8} $gap={5}><Expander /><MonitorIcon /><span>我的计算机</span></TreeRow>
              <TreeRow $pad={42} $gap={1}><VmTabIcon size={19} /><Selected>Ubuntu 64 位</Selected></TreeRow>
              <TreeRow $pad={25} $gap={5}><SharedIcon /><span>共享的虚拟机</span></TreeRow>
            </Tree>
          </Library>

          <Workspace>
            <TabStrip>
              <Tab $w={76}><HomeIcon /><span>主页</span><TabClose>×</TabClose></Tab>
              <Tab $w={124} $active><VmTabIcon /><span>Ubuntu 64 位</span><TabClose>×</TabClose></Tab>
            </TabStrip>
            <Screen>
              <Guest>
                <GnomeBar>
                  <GnomeLeft>
                    <span>活动</span>
                    <Gap $w={22} />
                    <Gear />
                    <Gap $w={7} />
                    <span>设置</span>
                    <Caret $ml={7} />
                  </GnomeLeft>
                  <GnomeClock>星期六 08：56</GnomeClock>
                  <GnomeRight>
                    <GnomeLang>zh</GnomeLang>
                    <Caret $ml={6} />
                    <Gap $w={32} />
                    <NetQuestion />
                    <Gap $w={12} />
                    <VolumeIcon />
                    <Gap $w={13} />
                    <PowerIcon />
                    <Caret $ml={11} />
                  </GnomeRight>
                </GnomeBar>
                <GuestBody>
                  <Dock>
                    <DockSlot><UpdaterIcon /></DockSlot>
                    <DockSlot><Firefox /></DockSlot>
                    <DockSlot><Thunderbird /></DockSlot>
                    <DockSlot><FilesIcon /></DockSlot>
                    <DockSlot><SpeakerIcon /></DockSlot>
                    <DockSlot><WriterIcon /></DockSlot>
                    <DockSlot><StoreIcon /></DockSlot>
                    <DockSlot><HelpIcon /></DockSlot>
                    <DockSlot>
                      <AppDots>
                        {Array.from({ length: 9 }, (_, i) => <span key={i} />)}
                      </AppDots>
                    </DockSlot>
                  </Dock>
                  <SettingsWindow>
                    <HeaderCell $divider>
                      <BackButton><BackChevron /></BackButton>
                      设备
                    </HeaderCell>
                    <HeaderCell>显示</HeaderCell>
                    <SideList>
                      {sideItems.map(item => (
                        <SideRow key={item.label} $active={item.active} $alt={item.alt} $h={item.h} $fs={item.fs}>
                          {item.icon}
                          <span>{item.label}</span>
                        </SideRow>
                      ))}
                    </SideList>
                    <Content>
                      <SectionTitle>未知的 Display</SectionTitle>
                      <Panel>
                        <PanelRow><RowLabel>方向</RowLabel><RowValue $ml={328}>横向</RowValue></PanelRow>
                        <PanelRow><RowLabel>分辨率</RowLabel><RowValue $ml={250}>800 × 600 (4 : 3)</RowValue></PanelRow>
                        <PanelRow><RowLabel>刷新频率</RowLabel><RowValue $ml={302}>60.00 Hz</RowValue></PanelRow>
                      </Panel>
                      <Panel>
                        <PanelRow><RowLabel>夜灯(N)</RowLabel></PanelRow>
                      </Panel>
                    </Content>
                  </SettingsWindow>
                </GuestBody>
                <CursorHalo />
              </Guest>
            </Screen>
          </Workspace>
        </Main>

        <StatusBar>
          <span>要返回到您的计算机，请按 Ctrl+Alt。</span>
          <StatusIcons>
            <StatusSlot><HddStatus /></StatusSlot>
            <StatusSlot><DiscStatus /></StatusSlot>
            <StatusSlot><NetStatus /></StatusSlot>
            <StatusSlot><AudioStatus /></StatusSlot>
            <StatusSlot><UsbStatus /></StatusSlot>
            <StatusSlot><KeysStatus /></StatusSlot>
            <StatusSlot><CamStatus /></StatusSlot>
            <StatusSep />
            <NoteStatus />
          </StatusIcons>
        </StatusBar>

        <Taskbar>
          <TaskSlot><WindowsLogo /></TaskSlot>
          <TaskSlot><TaskSearch /></TaskSlot>
          <TaskSlot><TaskView /></TaskSlot>
          <TaskSlot $w={49} $ml={2}><OrangeSearch /></TaskSlot>
          <TaskSlot $w={49}><Compass /></TaskSlot>
          <TaskSlot $w={49}><Firefox size={24} id="tf" /></TaskSlot>
          <TaskSlot $w={49}><Penguin size={21} /></TaskSlot>
          <TaskSlot $w={49}><WeChat /></TaskSlot>
          <TaskSlot $w={46} $ml={1} $active><VmwareIcon size={24} /></TaskSlot>
          <Tray>
            <TraySlot><Chevron /></TraySlot>
            <TraySlot><RecordDot /></TraySlot>
            <TraySlot><Penguin size={15} /></TraySlot>
            <TraySlot><WeChat size={17} /></TraySlot>
            <TraySlot><Shield /></TraySlot>
            <TraySlot><TigerTile /></TraySlot>
            <TraySlot><Battery /></TraySlot>
            <TraySlot><Wifi /></TraySlot>
            <TraySlot><Muted /></TraySlot>
            <TraySlot>英</TraySlot>
            <TrayClock><span>16:56</span><span>2021/7/24</span></TrayClock>
            <NotifySlot><NotifyIcon /></NotifySlot>
          </Tray>
        </Taskbar>
      </Page>
    </>
  );
}
